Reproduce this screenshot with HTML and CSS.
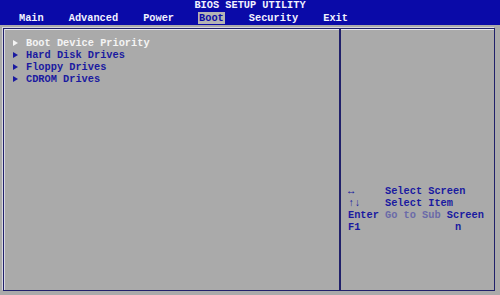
FILE: index.html
```html
<!DOCTYPE html>
<html lang="en">
<head>
  <meta charset="UTF-8" />
  <title>BIOS Setup Utility</title>
  <link rel="stylesheet" href="styles.css">
</head>
<body>

  <div class="topo">
    <div class="titulo">BIOS SETUP UTILITY</div>
    <div class="abas">
      <span class="aba">Main</span>
      <span class="aba">Advanced</span>
      <span class="aba">Power</span>
      <span class="aba ativa">Boot</span>
      <span class="aba">Security</span>
      <span class="aba">Exit</span>
    </div>
  </div>

  <div class="moldura">
    <div class="lista">
      <div class="item selecionado"><span class="seta"></span>Boot Device Priority</div>
      <div class="item"><span class="seta"></span>Hard Disk Drives</div>
      <div class="item"><span class="seta"></span>Floppy Drives</div>
      <div class="item"><span class="seta"></span>CDROM Drives</div>
    </div>
    <div class="ajuda">
      <div class="linha"><span class="tecla">&harr;</span><span>Select Screen</span></div>
      <div class="linha"><span class="tecla">&uarr;&darr;</span><span>Select Item</span></div>
      <div class="linha"><span class="tecla">Enter</span><span><span class="falha">Go to Sub</span> Screen</span></div>
      <div class="linha"><span class="tecla">F1</span><span class="resto">n</span></div>
    </div>
  </div>

</body>
</html>
```

FILE: styles.css
```css
body {
  margin: 0;
  width: 500px;
  height: 295px;
  background: #aaaaaa;
  font-family: "Liberation Mono", "DejaVu Sans Mono", monospace;
  font-weight: bold;
  font-size: 10.3px;
  overflow: hidden;
}

.topo {
  background: #0a0aa8;
  height: 25px;
  color: #f2f2ff;
}

.titulo {
  text-align: center;
  line-height: 11px;
}

.abas {
  display: flex;
  gap: 23px;
  margin-left: 18px;
  line-height: 12px;
  margin-top: 1px;
}

.aba {
  padding: 0 1px;
}

.aba.ativa {
  background: #b4b4b4;
  color: #0a0aa8;
}

.moldura {
  display: flex;
  margin: 3px 5px 0 3px;
  height: 261px;
  border: 1px solid #20206a;
  box-shadow: inset 1px 1px 0 #e8e8f0, -1px -1px 0 #d8d8e0;
}

.lista {
  width: 335px;
  border-right: 2px solid #20206a;
  box-shadow: 1px 0 0 #d8d8e0 inset;
  padding-top: 8px;
}

.item {
  display: flex;
  align-items: center;
  height: 12px;
  color: #1a1aa0;
  padding-left: 9px;
}

.item.selecionado {
  color: #f4f4f4;
}

.seta {
  width: 0;
  height: 0;
  border-left: 5px solid currentColor;
  border-top: 3.5px solid transparent;
  border-bottom: 3.5px solid transparent;
  margin-right: 8px;
}

.ajuda {
  flex: 1;
  display: flex;
  flex-direction: column;
  justify-content: flex-end;
  padding: 0 0 57px 7px;
  color: #1a1aa0;
}

.linha {
  display: flex;
  height: 12px;
  line-height: 12px;
}

.tecla {
  width: 37px;
  flex: none;
}

.falha {
  color: #6a6aa8;
}

.resto {
  padding-left: 70px;
}
```
